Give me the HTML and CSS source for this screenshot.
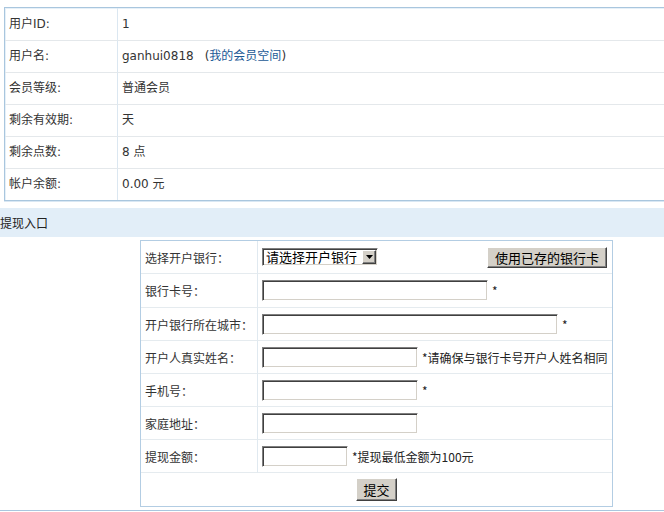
FILE: index.html
```html
<!DOCTYPE html>
<html lang="zh-CN">
<head>
<meta charset="utf-8">
<title>提现入口</title>
<link rel="stylesheet" href="styles.css">
</head>
<body>
<div class="page">
  <div class="info">
    <div class="lbl first">用户ID:</div><div class="val first">1</div>
    <div class="lbl">用户名:</div><div class="val">ganhui0818<span class="space">(<a class="link" href="#">我的会员空间</a>)</span></div>
    <div class="lbl">会员等级:</div><div class="val">普通会员</div>
    <div class="lbl">剩余有效期:</div><div class="val">天</div>
    <div class="lbl">剩余点数:</div><div class="val">8 点</div>
    <div class="lbl last">帐户余额:</div><div class="val last">0.00 元</div>
  </div>

  <div class="withdraw">
    <div class="section-title">提现入口</div>
    <div class="form-holder">
      <div class="form">
        <div class="f-lbl">选择开户银行：</div>
        <div class="f-val spread">
          <div class="select"><span class="select-text">请选择开户银行</span><span class="select-arrow"><svg width="7" height="4" viewBox="0 0 7 4"><path d="M0 0h7L3.5 4z" fill="#000"/></svg></span></div>
          <button class="btn btn-card" type="button">使用已存的银行卡</button>
        </div>

        <div class="f-lbl tall">银行卡号：</div>
        <div class="f-val tall"><input class="field w225" type="text"><span class="note">*</span></div>

        <div class="f-lbl">开户银行所在城市：</div>
        <div class="f-val"><input class="field w295" type="text"><span class="note">*</span></div>

        <div class="f-lbl">开户人真实姓名：</div>
        <div class="f-val"><input class="field w155" type="text"><span class="note">*请确保与银行卡号开户人姓名相同</span></div>

        <div class="f-lbl">手机号：</div>
        <div class="f-val"><input class="field w155" type="text"><span class="note">*</span></div>

        <div class="f-lbl">家庭地址：</div>
        <div class="f-val"><input class="field w155" type="text"></div>

        <div class="f-lbl">提现金额：</div>
        <div class="f-val"><input class="field w85" type="text"><span class="note">*提现最低金额为100元</span></div>

        <div class="f-submit"><button class="btn btn-submit" type="submit">提交</button></div>
      </div>
    </div>
  </div>
</div>
</body>
</html>
```

FILE: styles.css
```css
html, body {
  margin: 0;
  padding: 0;
  overflow: hidden;
  background: #fff;
}

body {
  font-family: "DejaVu Sans", "Noto Sans CJK SC", sans-serif;
  font-size: 12px;
  color: #333;
}

.page {
  width: 753px;
}

/* ---------- member info ---------- */
.info {
  margin: 7px 0 0 4px;
  width: 744px;
  display: grid;
  grid-template-columns: 113px 1fr;
  border: 1px solid #a9c6de;
  box-shadow: 0 1px 0 #d9e7f3, inset 1px 1px 0 #e6f0f8;
}

.lbl,
.val {
  line-height: 31px;
  height: 31px;
  border-bottom: 1px solid #e4e8eb;
  padding-left: 4px;
  white-space: nowrap;
}

.lbl {
  border-right: 1px solid #dbe7f1;
}

.first {
  padding-top: 1px;
}

.last {
  border-bottom: none;
}

.space {
  margin-left: 11px;
}

.link {
  color: #1b5a96;
  text-decoration: none;
}

/* ---------- withdraw ---------- */
.withdraw {
  margin-top: 7px;
  padding-bottom: 3px;
  border-bottom: 1px solid #a9c6de;
  box-shadow: 0 1px 0 #d9e7f3;
}

.section-title {
  height: 29px;
  line-height: 29px;
  background: #e2eef8;
  color: #222;
  font-family: "Noto Sans CJK SC", sans-serif;
}

.form-holder {
  display: flex;
  justify-content: center;
  padding-top: 3px;
}

.form {
  width: 471px;
  display: grid;
  grid-template-columns: 117px 1fr;
  border: 1px solid #b3cde3;
  font-family: "Noto Sans CJK SC", sans-serif;
}

.f-lbl,
.f-val {
  box-sizing: border-box;
  height: 33px;
  display: flex;
  align-items: center;
  border-bottom: 1px solid #e5ebef;
  padding-left: 4px;
  white-space: nowrap;
  min-width: 0;
}

.f-lbl {
  border-right: 1px solid #e0e9f0;
  color: #333;
}

.tall {
  height: 34px;
}

.spread {
  justify-content: space-between;
  padding-right: 5px;
}

.note {
  margin-left: 4px;
  font-size: 12px;
  color: #222;
}

.field {
  box-sizing: border-box;
  height: 21px;
  margin: 0;
  padding: 0 2px;
  border: 1px solid;
  border-color: #7f7f7f #fff #fff #7f7f7f;
  box-shadow: inset 1px 1px 0 #404040, inset -1px -1px 0 #d4d0c8;
  background: #fff;
  font: 12px "Noto Sans CJK SC", sans-serif;
  outline: none;
}

.w225 { width: 226px; }
.w295 { width: 296px; }
.w155 { width: 156px; }
.w85  { width: 86px; }

.select {
  box-sizing: border-box;
  width: 116px;
  height: 18px;
  display: flex;
  align-items: stretch;
  border: 1px solid;
  border-color: #7f7f7f #fff #fff #7f7f7f;
  box-shadow: inset 1px 1px 0 #404040, inset -1px -1px 0 #d4d0c8;
  padding: 1px;
  background: #fff;
}

.select-text {
  flex: 1;
  font-size: 13px;
  line-height: 14px;
  color: #000;
  padding-left: 2px;
}

.select-arrow {
  box-sizing: border-box;
  width: 14px;
  flex: none;
  display: flex;
  align-items: center;
  justify-content: center;
  background: #d4d0c8;
  border: 1px solid;
  border-color: #fff #404040 #404040 #fff;
  box-shadow: inset -1px -1px 0 #808080;
}

.btn {
  box-sizing: border-box;
  margin: 0;
  padding: 0;
  background: #d4d0c8;
  border: 1px solid;
  border-color: #fff #404040 #404040 #fff;
  box-shadow: inset -1px -1px 0 #808080;
  font: 13px "Noto Sans CJK SC", sans-serif;
  color: #000;
  line-height: 17px;
  flex: none;
}

.btn-card {
  width: 120px;
  height: 21px;
}

.btn-submit {
  width: 41px;
  height: 23px;
}

.f-submit {
  grid-column: 1 / 3;
  height: 33px;
  display: flex;
  align-items: center;
  justify-content: center;
}
```
